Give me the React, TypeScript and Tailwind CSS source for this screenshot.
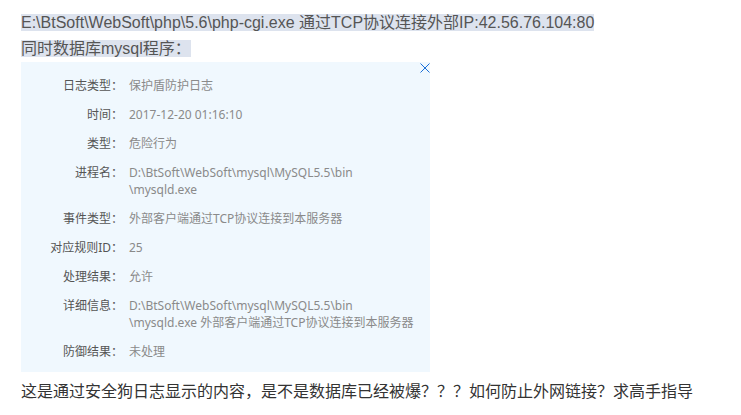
const rows: { label: string; value: React.ReactNode }[] = [
  { label: '日志类型：', value: '保护盾防护日志' },
  { label: '时间：', value: '2017-12-20 01:16:10' },
  { label: '类型：', value: '危险行为' },
  {
    label: '进程名：',
    value: (
      <>
        D:\BtSoft\WebSoft\mysql\MySQL5.5\bin
        <br />
        \mysqld.exe
      </>
    ),
  },
  { label: '事件类型：', value: '外部客户端通过TCP协议连接到本服务器' },
  { label: '对应规则ID：', value: '25' },
  { label: '处理结果：', value: '允许' },
  {
    label: '详细信息：',
    value: (
      <>
        D:\BtSoft\WebSoft\mysql\MySQL5.5\bin
        <br />
        \mysqld.exe 外部客户端通过TCP协议连接到本服务器
      </>
    ),
  },
  { label: '防御结果：', value: '未处理' },
];

const LogPanel = () => (
  <div className="relative w-[409px] bg-[#f0f8fe] pt-[15px] pb-[12px]">
    <button className="absolute top-[1px] right-0 h-[10px] w-[10px]">
      <svg viewBox="0 0 10 10" className="h-[10px] w-[10px]">
        <path d="M0.5 0.5 L9.5 9.5 M9.5 0.5 L0.5 9.5" stroke="#1b6fd8" strokeWidth="1" fill="none" />
      </svg>
    </button>
    <div className="flex flex-col gap-[12px] text-[12px] leading-[17px] font-['Noto_Sans','Noto_Sans_CJK_SC',sans-serif]">
      {rows.map((r) => (
        <div key={r.label} className="flex">
          <span className="w-[102px] shrink-0 text-right text-[#555]">{r.label}</span>
          <span className="ml-[6px] text-[#8a8a8a]">{r.value}</span>
        </div>
      ))}
    </div>
  </div>
);

export default function App() {
  return (
    <div className="min-h-screen bg-white pl-[21px] pt-[10px] font-['Liberation_Sans','Noto_Sans_CJK_SC',sans-serif] text-[16px] leading-[26px]">
      <p className="text-[#555]">
        <span className="bg-[#dde3ee]">
          E:\BtSoft\WebSoft\php\5.6\php-cgi.exe 通过TCP协议连接外部IP:42.56.76.104:80
        </span>
      </p>
      <p className="text-[#555]">
        <span className="bg-[#dde3ee]">同时数据库mysql程序：</span>
      </p>
      <LogPanel />
      <p className="mt-[7px] text-[#333]">
        这是通过安全狗日志显示的内容，是不是数据库已经被爆？？？如何防止外网链接？求高手指导
      </p>
    </div>
  );
}
